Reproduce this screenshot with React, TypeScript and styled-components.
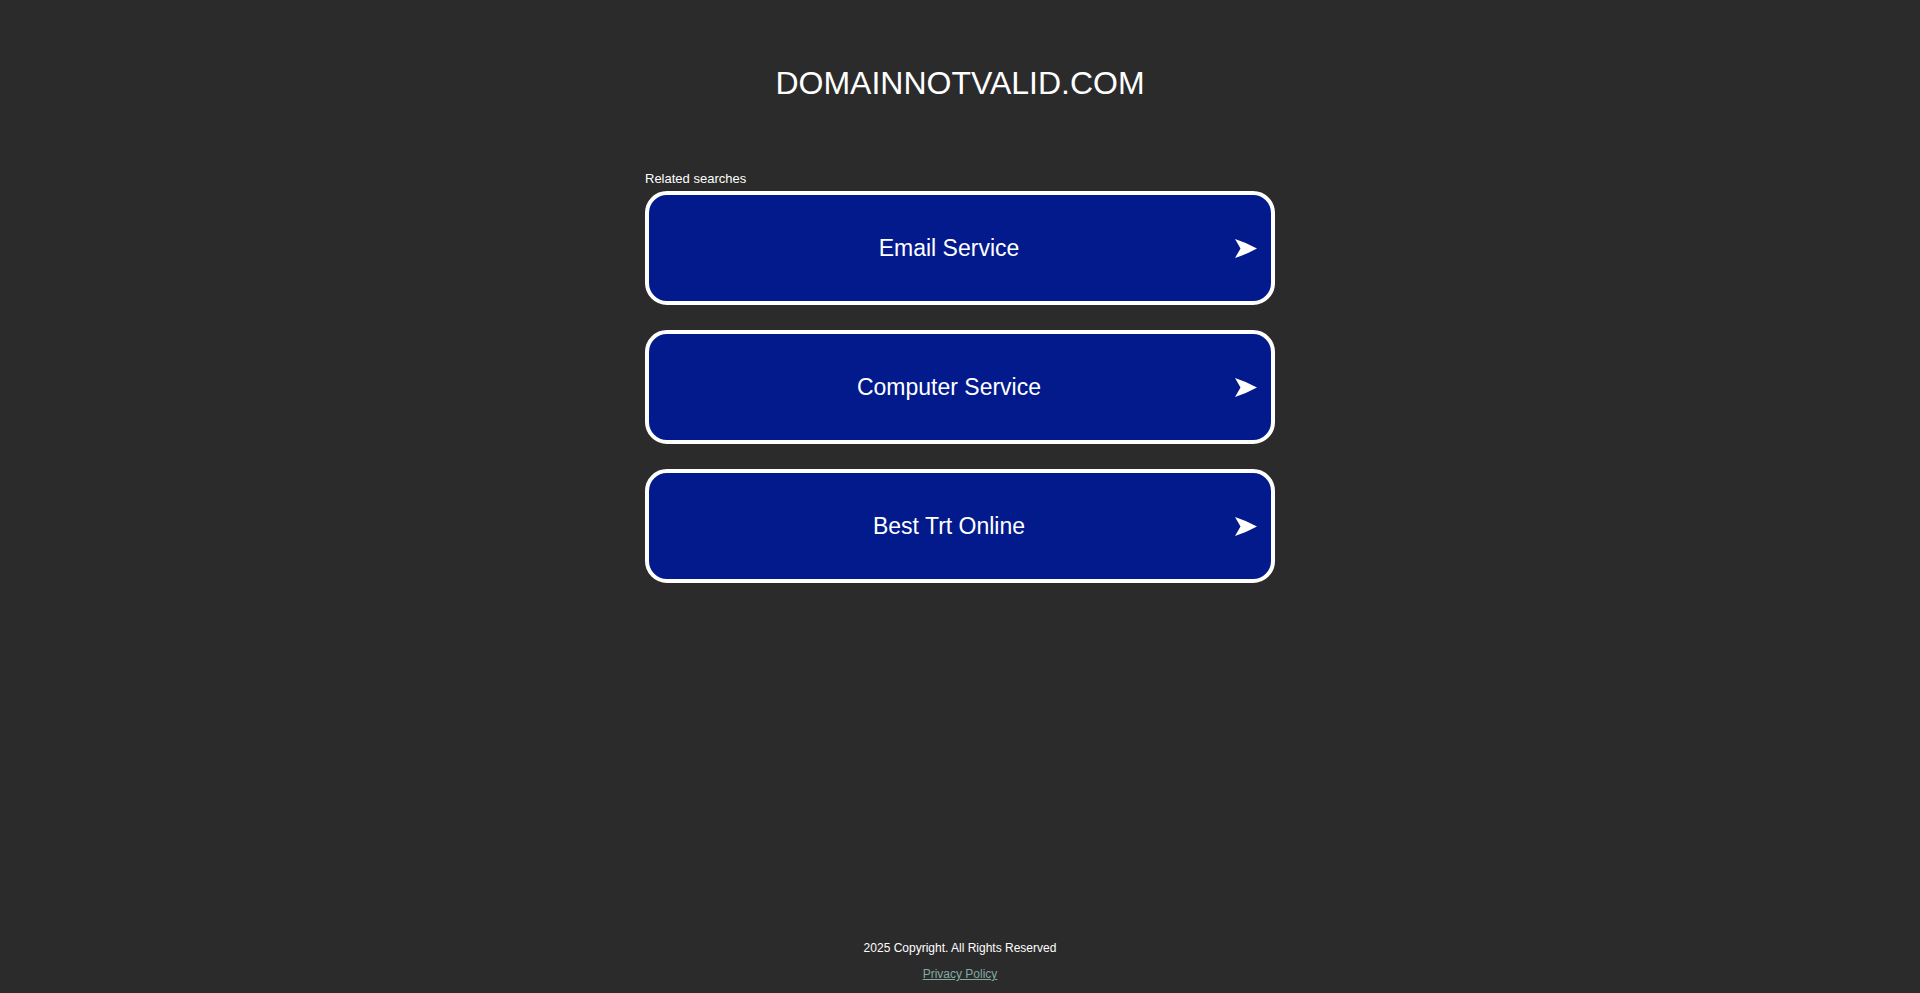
import React from "react";
import styled, { createGlobalStyle } from "styled-components";

const searches = ["Email Service", "Computer Service", "Best Trt Online"];

const GlobalStyle = createGlobalStyle`
  html, body {
    margin: 0;
    padding: 0;
    background: #2b2b2b;
  }
  body {
    font-family: "Liberation Sans", Arial, sans-serif;
    color: #ffffff;
  }
`;

const Page = styled.div`
  min-height: 100vh;
  display: flex;
  flex-direction: column;
  box-sizing: border-box;
  padding-top: 64px;
`;

const Title = styled.h1`
  margin: 0;
  font-size: 32px;
  font-weight: 400;
  line-height: 38px;
  text-align: center;
`;

const Searches = styled.div`
  width: 630px;
  margin: 69px auto 0;
  display: flex;
  flex-direction: column;
`;

const Label = styled.div`
  font-size: 13px;
  line-height: 15px;
  margin-bottom: 5px;
`;

const List = styled.div`
  display: flex;
  flex-direction: column;
  gap: 25px;
`;

const SearchLink = styled.a`
  display: flex;
  align-items: center;
  height: 114px;
  box-sizing: border-box;
  border: 4px solid #ffffff;
  border-radius: 22px;
  background: #021a8c;
  color: #ffffff;
  text-decoration: none;
  padding-right: 14px;
  cursor: pointer;
`;

const SearchText = styled.span`
  flex: 1;
  text-align: center;
  padding-left: 14px;
  font-size: 23px;
  line-height: 28px;
`;

const Arrow = styled.svg`
  width: 22px;
  height: 19px;
  flex-shrink: 0;
`;

const Footer = styled.footer`
  margin-top: auto;
  padding-bottom: 12px;
  display: flex;
  flex-direction: column;
  align-items: center;
  gap: 12px;
  font-size: 12px;
  line-height: 14px;
`;

const Policy = styled.a`
  color: #84aaa3;
  text-decoration: underline;
`;

const ArrowIcon = () => (
  <Arrow viewBox="0 0 22 19">
    <path d="M0 0 Q11 3.5 22 9.5 Q11 15.5 0 19 L5.5 9.5 Z" fill="#ffffff" />
  </Arrow>
);

export default function App() {
  return (
    <>
      <GlobalStyle />
      <Page>
        <Title>DOMAINNOTVALID.COM</Title>
        <Searches>
          <Label>Related searches</Label>
          <List>
            {searches.map((s) => (
              <SearchLink key={s}>
                <SearchText>{s}</SearchText>
                <ArrowIcon />
              </SearchLink>
            ))}
          </List>
        </Searches>
        <Footer>
          <span>2025 Copyright. All Rights Reserved</span>
          <Policy>Privacy Policy</Policy>
        </Footer>
      </Page>
    </>
  );
}
